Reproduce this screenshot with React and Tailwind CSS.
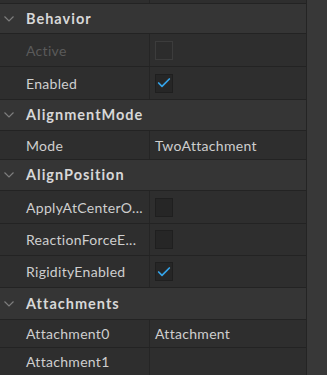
import { Check } from 'lucide-react';

const rows = [
    { type: 'blank', h: 'h-[4px]' },
    { type: 'header', label: 'Behavior', h: 'h-[30px]' },
    { type: 'prop', label: 'Active', value: { kind: 'check', checked: false, disabled: true }, h: 'h-[33px]', disabled: true },
    { type: 'prop', label: 'Enabled', value: { kind: 'check', checked: true }, h: 'h-[33px]' },
    { type: 'header', label: 'AlignmentMode', h: 'h-[31px]' },
    { type: 'prop', label: 'Mode', value: { kind: 'text', text: 'TwoAttachment' }, h: 'h-[29px]' },
    { type: 'header', label: 'AlignPosition', h: 'h-[31px]' },
    { type: 'prop', label: 'ApplyAtCenterO...', value: { kind: 'check', checked: false }, h: 'h-[33px]' },
    { type: 'prop', label: 'ReactionForceE...', value: { kind: 'check', checked: false }, h: 'h-[32px]' },
    { type: 'prop', label: 'RigidityEnabled', value: { kind: 'check', checked: true }, h: 'h-[32px]' },
    { type: 'header', label: 'Attachments', h: 'h-[32px]' },
    { type: 'prop', label: 'Attachment0', value: { kind: 'text', text: 'Attachment' }, h: 'h-[28px]' },
    { type: 'prop', label: 'Attachment1', value: { kind: 'text', text: '' }, h: 'h-[28px]' },
];

function Chevron() {
    return (
        <svg width="10" height="6" viewBox="0 0 10 6" className="shrink-0">
            <path d="M0.5 0.5 L5 5 L9.5 0.5" fill="none" stroke="#7d7d7d" strokeWidth="1.2" />
        </svg>
    );
}

function CheckBox({ checked, disabled }) {
    if (disabled) {
        return <div className="w-[18px] h-[19px] border border-[#3c3c3c] bg-[#2c2c2c]" />;
    }
    return (
        <div className="w-[18px] h-[19px] border border-[#1f1f1f] bg-[#262626] flex items-center justify-center">
            {checked && <Check size={16} strokeWidth={2.6} className="text-[#35a3e8]" />}
        </div>
    );
}

export default function App() {
    return (
        <div className="w-[327px] h-[375px] overflow-hidden flex bg-[#363636] font-['Lato','Liberation_Sans',sans-serif] text-[14px] tracking-[0.3px]">
            <div className="w-[307px] flex flex-col border-r border-[#242424]">
                {rows.map((row, i) => {
                    if (row.type === 'blank') {
                        return (
                            <div key={i} className={`${row.h} shrink-0 flex bg-[#2e2e2e] border-b border-[#232323]`}>
                                <div className="w-[150px] border-r border-[#252525]" />
                            </div>
                        );
                    }
                    if (row.type === 'header') {
                        return (
                            <div key={i} className={`${row.h} shrink-0 flex items-center bg-[#353535] border-b border-[#232323]`}>
                                <div className="w-[26px] pl-[4px] flex items-center">
                                    <Chevron />
                                </div>
                                <span className="font-bold text-[14.5px] text-[#d8d8d8] tracking-[1px]">{row.label}</span>
                            </div>
                        );
                    }
                    return (
                        <div key={i} className={`${row.h} shrink-0 flex bg-[#2e2e2e] border-b border-[#232323]`}>
                            <div className={`w-[150px] pl-[26px] flex items-center border-r border-[#252525] whitespace-nowrap overflow-hidden ${row.disabled ? 'text-[#5a5a5a]' : 'text-[#cfcfcf]'}`}>
                                {row.label}
                            </div>
                            <div className="flex-1 pl-[5px] flex items-center text-[#cfcfcf]">
                                {row.value.kind === 'check' ? (
                                    <CheckBox checked={row.value.checked} disabled={row.value.disabled} />
                                ) : (
                                    <span>{row.value.text}</span>
                                )}
                            </div>
                        </div>
                    );
                })}
                <div className="flex-1 flex bg-[#2e2e2e]">
                    <div className="w-[150px] border-r border-[#252525]" />
                </div>
            </div>
            <div className="flex-1 bg-[#383838]" />
        </div>
    );
}
